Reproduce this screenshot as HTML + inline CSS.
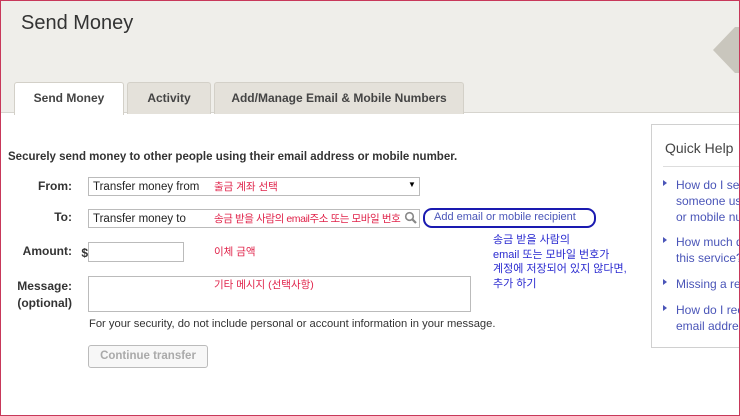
<!DOCTYPE html>
<html><head><meta charset="utf-8"><style>
*{margin:0;padding:0;box-sizing:border-box}
html,body{width:740px;height:416px;overflow:hidden}
body{background:#fff;font-family:"Liberation Sans","Noto Sans CJK KR",sans-serif;position:relative}
.frame{position:absolute;left:0;top:0;width:740px;height:416px;border:1px solid #c8385a;z-index:10;pointer-events:none}
.hdr{position:absolute;left:0;top:0;width:740px;height:113px;background:#efeeea;border-bottom:1px solid #d6d4ce}
.hdr h1{position:absolute;left:21px;top:12px;font-weight:normal;font-size:20px;color:#333}
.tri{position:absolute;left:713px;top:27px;width:0;height:0;border-top:23px solid transparent;border-bottom:23px solid transparent;border-right:22px solid #c9c6bd}
.tri2{position:absolute;left:735px;top:27px;width:5px;height:46px;background:#c9c6bd}
.tab{position:absolute;top:82px;height:32px;border:1px solid #d3d0c8;border-bottom:none;background:#e4e1da;border-radius:3px 3px 0 0;font-size:12px;font-weight:bold;color:#444;text-align:center;line-height:31px}
.tab.a{background:#fff;height:33px;z-index:2}
.k{position:absolute;font-family:"Liberation Sans","Noto Sans CJK KR",sans-serif;font-size:10.5px;white-space:nowrap}
.red{color:#e0234a}.blue{color:#2a2ad0}
.lbl{position:absolute;font-size:12px;font-weight:bold;color:#333;text-align:right}
.in{position:absolute;border:1px solid #bbb;background:#fff;font-size:11.5px;color:#222;padding-left:4px;line-height:18px}
.qh{position:absolute;left:651px;top:124px;width:89px;height:224px;border:1px solid #d0d0d0;border-right:none;background:#fff;overflow:hidden}
.qh h2{position:absolute;left:13px;top:15px;font-weight:normal;font-size:14px;color:#444;white-space:nowrap}
.qh .ln{position:absolute;left:11px;top:41px;width:100px;border-top:1px solid #ddd}
.qh .it{position:absolute;left:24px;font-size:12px;line-height:16px;color:#4a55b8;white-space:nowrap}
.qh .ar{position:absolute;left:11px;width:0;height:0;border-top:3px solid transparent;border-bottom:3px solid transparent;border-left:4px solid #4a55b8}
</style></head><body>
<div class="hdr"><h1>Send Money</h1><div class="tri"></div><div class="tri2"></div></div>
<div class="tab a" style="left:14px;width:110px">Send Money</div>
<div class="tab" style="left:127px;width:84px">Activity</div>
<div class="tab" style="left:214px;width:250px">Add/Manage Email &amp; Mobile Numbers</div>

<div style="position:absolute;left:8px;top:151px;font-size:11.5px;font-weight:bold;color:#333;white-space:nowrap">Securely send money to other people using their email address or mobile number.</div>

<div class="lbl" style="left:20px;top:179px;width:52px">From:</div>
<div class="in" style="left:88px;top:177px;width:332px;height:19px">Transfer money from</div>
<div style="position:absolute;left:408px;top:180px;font-size:8px;color:#000">▼</div>
<div class="k red" style="left:214px;top:179px">출금 계좌 선택</div>

<div class="lbl" style="left:20px;top:210px;width:52px">To:</div>
<div class="in" style="left:88px;top:209px;width:332px;height:19px">Transfer money to</div>
<div class="k red" style="left:214px;top:211px;letter-spacing:-0.4px">송금 받을 사람의 email주소 또는 모바일 번호</div>
<svg style="position:absolute;left:404px;top:211px" width="14" height="14" viewBox="0 0 14 14"><circle cx="5.5" cy="5.5" r="3.8" fill="none" stroke="#888" stroke-width="1.6"/><path d="M8.3 8.3L12 12" stroke="#888" stroke-width="2.2"/></svg>
<div style="position:absolute;left:423px;top:208px;width:173px;height:20px;border:2px solid #1a1ab0;border-radius:9px"></div>
<div style="position:absolute;left:434px;top:211px;font-size:11px;color:#4a55b8">Add email or mobile recipient</div>
<div class="k blue" style="left:493px;top:233px;line-height:14.5px;font-size:11px">송금 받을 사람의<br>email 또는 모바일 번호가<br>계정에 저장되어 있지 않다면,<br>추가 하기</div>

<div class="lbl" style="left:10px;top:244px;width:62px">Amount:</div>
<div class="lbl" style="left:76px;top:246px;width:12px">$</div>
<div class="in" style="left:88px;top:242px;width:96px;height:20px"></div>
<div class="k red" style="left:214px;top:244px">이체 금액</div>

<div class="lbl" style="left:4px;top:278px;width:68px;line-height:17px">Message:<br>(optional)</div>
<div class="in" style="left:88px;top:276px;width:383px;height:36px"></div>
<div class="k red" style="left:214px;top:277px">기타 메시지 (선택사항)</div>
<div style="position:absolute;left:89px;top:318px;font-size:11.2px;color:#333;white-space:nowrap">For your security, do not include personal or account information in your message.</div>
<div style="position:absolute;left:88px;top:345px;width:120px;height:23px;border:1px solid #bbb;border-radius:3px;background:#f7f7f7;font-size:11.5px;font-weight:bold;color:#aaa;text-align:center;line-height:21px">Continue transfer</div>

<div class="qh"><h2>Quick Help</h2><div class="ln"></div>
<div class="ar" style="top:55px"></div><div class="it" style="top:52px">How do I send money to<br>someone using email<br>or mobile number?</div>
<div class="ar" style="top:112px"></div><div class="it" style="top:109px">How much does<br>this service? cost</div>
<div class="ar" style="top:154px"></div><div class="it" style="top:151px">Missing a recipient?</div>
<div class="ar" style="top:180px"></div><div class="it" style="top:177px">How do I receive<br>email address</div>
</div>
<div class="frame"></div>
</body></html>
